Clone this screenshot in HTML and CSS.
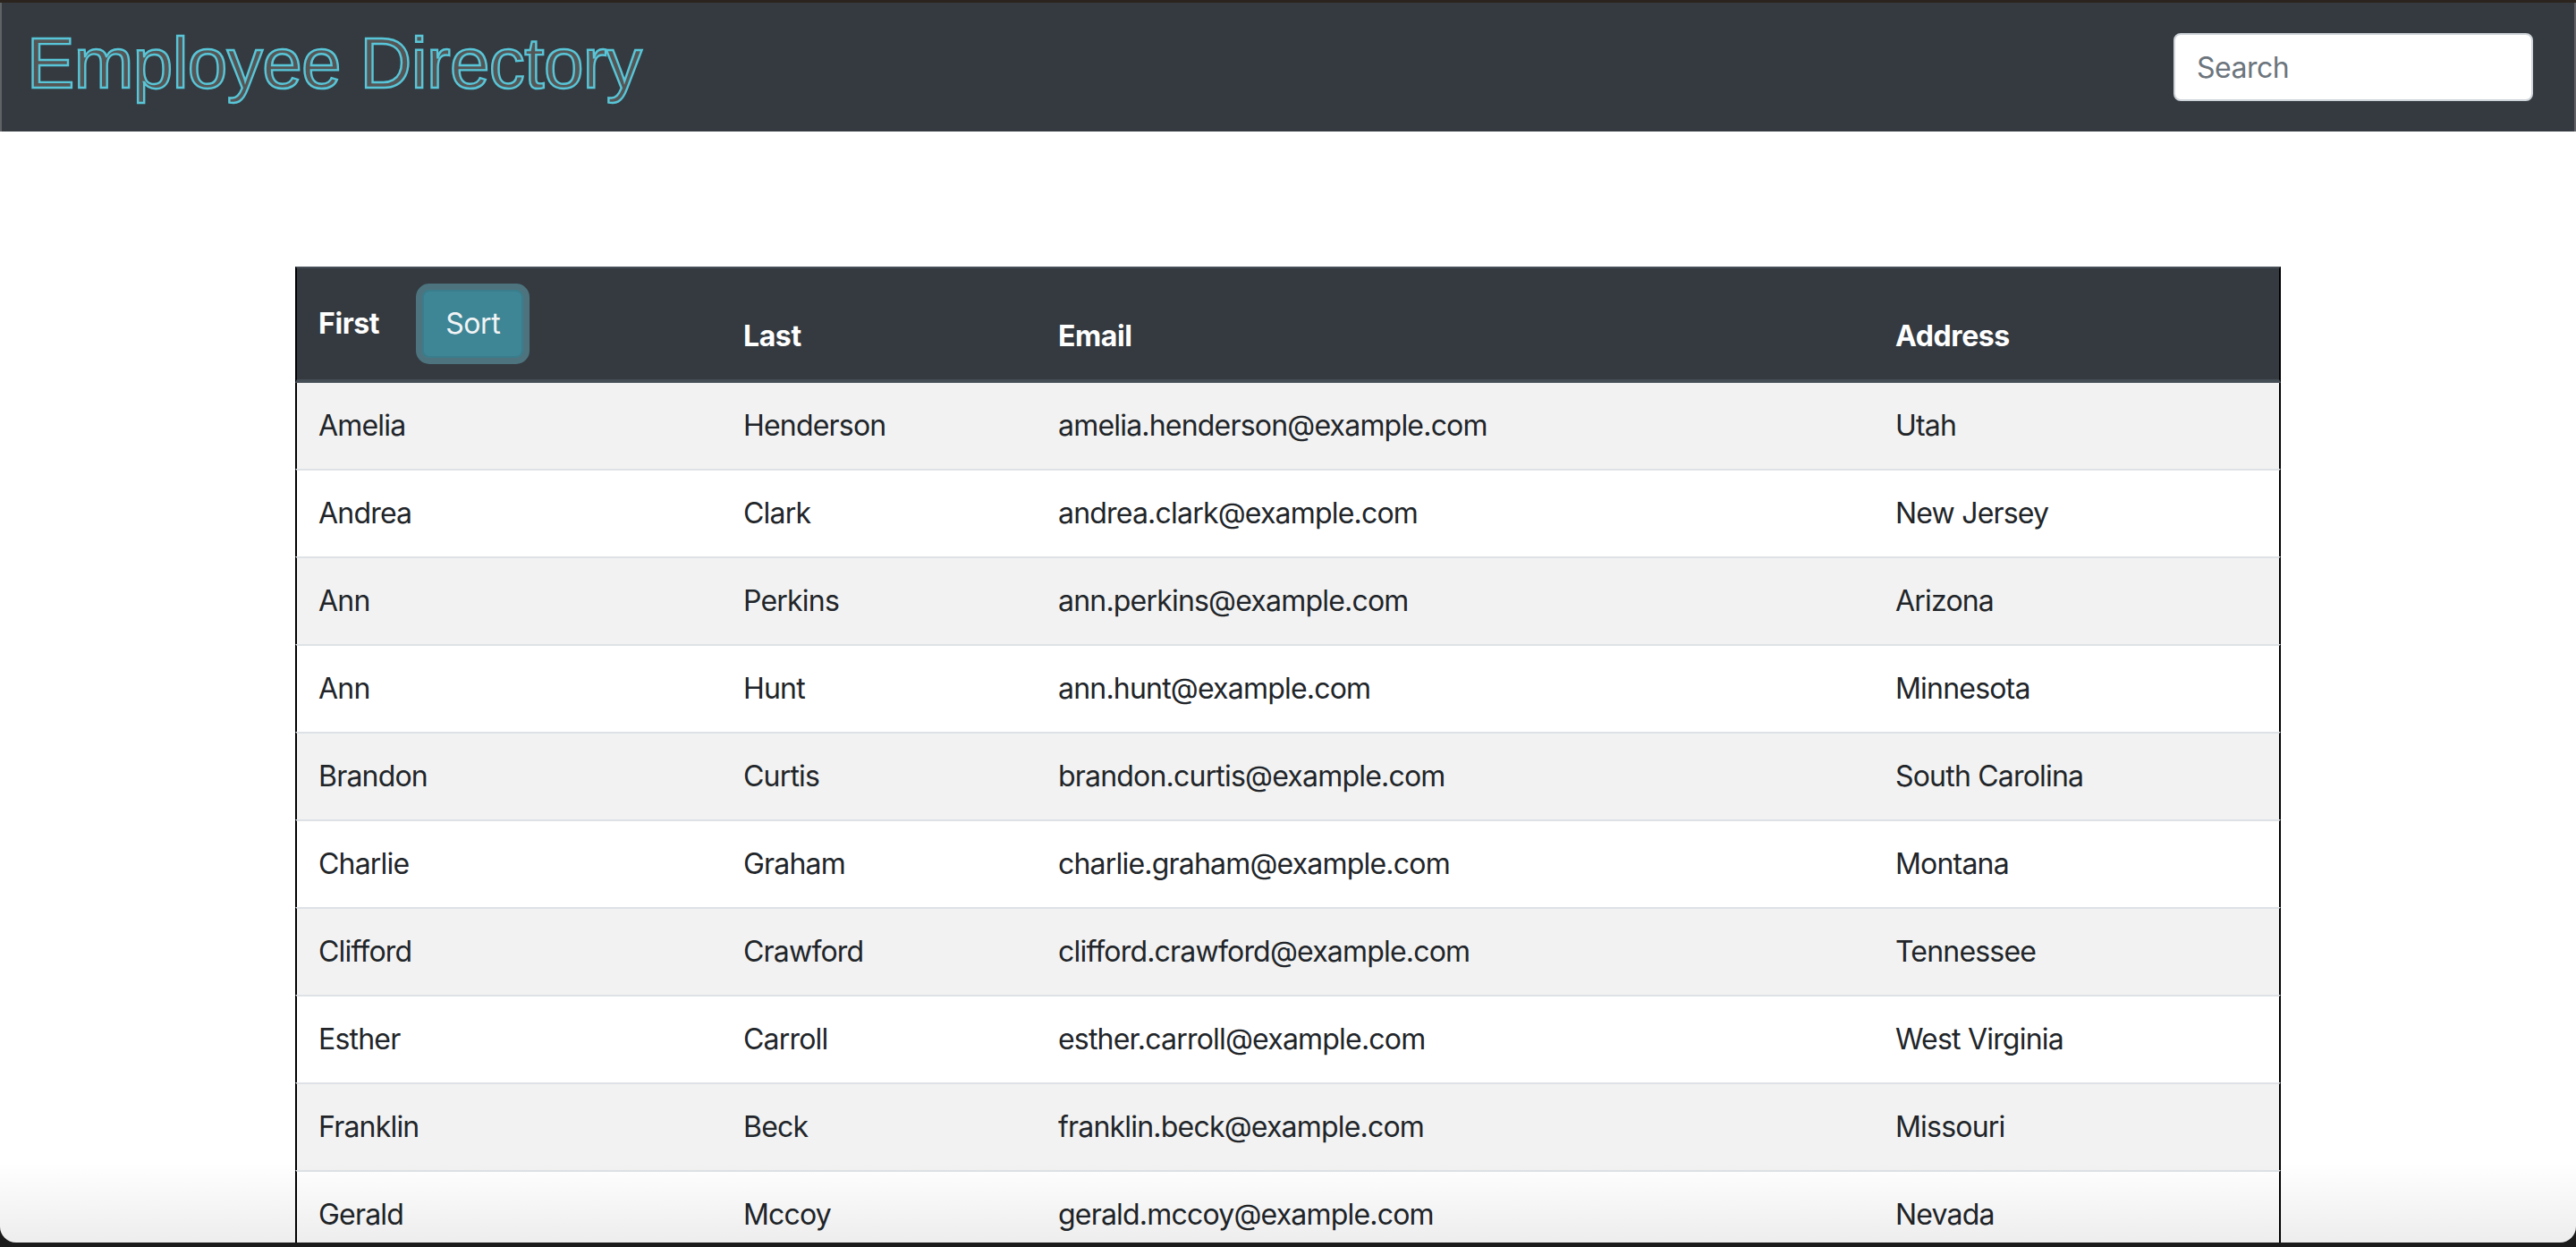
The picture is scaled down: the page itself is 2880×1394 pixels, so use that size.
FILE: index.html
```html
<!DOCTYPE html>
<html lang="en">
<head>
<meta charset="utf-8">
<title>Employee Directory</title>
<link rel="stylesheet" href="styles.css">
</head>
<body>
<div class="window">
  <header class="navbar">
    <h1 class="brand">Employee Directory</h1>
    <input class="search" type="text" placeholder="Search">
  </header>
  <main class="container">
    <table class="table">
      <colgroup>
        <col class="c1"><col class="c2"><col class="c3"><col class="c4">
      </colgroup>
      <thead>
        <tr>
          <th><span>First</span><button class="sort">Sort</button></th>
          <th>Last</th>
          <th>Email</th>
          <th>Address</th>
        </tr>
      </thead>
      <tbody>
        <tr><td>Amelia</td><td>Henderson</td><td>amelia.henderson@example.com</td><td>Utah</td></tr>
        <tr><td>Andrea</td><td>Clark</td><td>andrea.clark@example.com</td><td>New Jersey</td></tr>
        <tr><td>Ann</td><td>Perkins</td><td>ann.perkins@example.com</td><td>Arizona</td></tr>
        <tr><td>Ann</td><td>Hunt</td><td>ann.hunt@example.com</td><td>Minnesota</td></tr>
        <tr><td>Brandon</td><td>Curtis</td><td>brandon.curtis@example.com</td><td>South Carolina</td></tr>
        <tr><td>Charlie</td><td>Graham</td><td>charlie.graham@example.com</td><td>Montana</td></tr>
        <tr><td>Clifford</td><td>Crawford</td><td>clifford.crawford@example.com</td><td>Tennessee</td></tr>
        <tr><td>Esther</td><td>Carroll</td><td>esther.carroll@example.com</td><td>West Virginia</td></tr>
        <tr><td>Franklin</td><td>Beck</td><td>franklin.beck@example.com</td><td>Missouri</td></tr>
        <tr><td>Gerald</td><td>Mccoy</td><td>gerald.mccoy@example.com</td><td>Nevada</td></tr>
      </tbody>
    </table>
  </main>
  <div class="fade"></div>
</div>
</body>
</html>
```

FILE: styles.css
```css
html, body {
  margin: 0;
  height: 100%;
}

body {
  background: #1c1b1b;
  overflow: hidden;
  font-family: Inter, "Noto Sans", sans-serif;
}

.window {
  position: relative;
  height: 1389px;
  box-sizing: border-box;
  background: #fff;
  border-top: 3px solid #2b231e;
  border-radius: 0 0 18px 18px;
  overflow: hidden;
}

.navbar {
  display: flex;
  align-items: center;
  justify-content: space-between;
  height: 144px;
  box-sizing: border-box;
  padding: 0 46px 0 28px;
  background: #343a40;
  border-left: 2px solid #606265;
  border-right: 2px solid #606265;
}

.brand {
  margin: 0 0 8px;
  font-family: "Liberation Sans", Arial, sans-serif;
  font-weight: 400;
  font-size: 80px;
  line-height: 96px;
  letter-spacing: -0.6px;
  color: #555555;
  -webkit-text-stroke: 2.4px #58c6d8;
}

.search {
  width: 402px;
  height: 76px;
  box-sizing: border-box;
  padding: 12px 24px;
  font-family: Inter, "Noto Sans", sans-serif;
  font-size: 32px;
  line-height: 48px;
  letter-spacing: -0.5px;
  color: #495057;
  background: #fff;
  border: 2px solid #ced4da;
  border-radius: 8px;
  outline: none;
}

.search::placeholder {
  color: #6c757d;
}

.container {
  width: 2220px;
  margin: 151px auto 0;
}

.table {
  width: 100%;
  table-layout: fixed;
  border-collapse: separate;
  border-spacing: 0;
  color: #212529;
  font-size: 32px;
  line-height: 48px;
}

.c1 { width: 477px; }
.c2 { width: 352px; }
.c3 { width: 936px; }
.c4 { width: 455px; }

.table th {
  padding: 24px;
  text-align: left;
  vertical-align: bottom;
  font-weight: 700;
  letter-spacing: -0.4px;
  color: #fff;
  background: #343a40;
  border-top: 2px solid #454d55;
  border-bottom: 4px solid #454d55;
}

.table td {
  padding: 24px;
  vertical-align: top;
  letter-spacing: -0.8px;
  border-top: 2px solid #dee2e6;
  white-space: nowrap;
}

.table tbody tr:first-child td {
  border-top: 0;
}

.table tbody tr:nth-child(odd) td {
  background: #f2f2f2;
}

.table tr > :first-child {
  border-left: 2px solid #000;
}

.table tr > :last-child {
  border-right: 2px solid #000;
}

.sort {
  margin-left: 48px;
  padding: 12px 24px;
  font-family: inherit;
  font-size: 32px;
  line-height: 48px;
  font-weight: 400;
  letter-spacing: -0.4px;
  color: #f2f4f5;
  background: #3e8696;
  border: 2px solid #3a7d8c;
  border-radius: 8px;
  box-shadow: 0 0 0 7px #4d747e;
  vertical-align: baseline;
}

.fade {
  position: absolute;
  left: 0;
  right: 0;
  bottom: 0;
  height: 90px;
  pointer-events: none;
  background: linear-gradient(to bottom, rgba(0, 0, 0, 0), rgba(0, 0, 0, 0.07));
}
```
